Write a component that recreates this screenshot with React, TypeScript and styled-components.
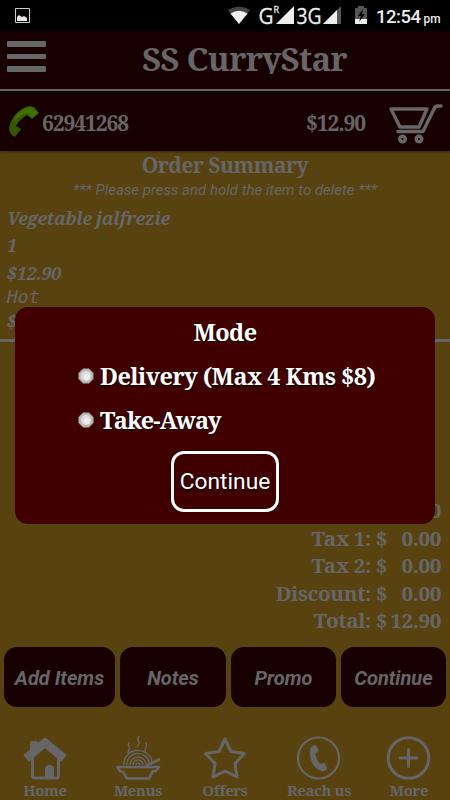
import React from 'react';
import styled, { createGlobalStyle } from 'styled-components';

const serif = '"Noto Serif", "Droid Serif", "DejaVu Serif Condensed", "DejaVu Serif", serif';
const sans = 'Roboto, sans-serif';
const muted = '#666668';
const dark = '#190000';
const gold = '#58420f';

const Global = createGlobalStyle`
  * { box-sizing: border-box; }
  body { margin: 0; background: ${gold}; }
`;
const Screen = styled.div`
  position: relative;
  width: 450px;
  height: 800px;
  overflow: hidden;
  display: flex;
  flex-direction: column;
  background: ${gold};
  color: ${muted};
  font-family: ${serif};
  font-weight: 700;
  white-space: pre;
`;
const StatusBar = styled.div`
  height: 31px;
  flex: none;
  background: #000;
  svg { display: block; }
`;
const Header = styled.header`
  height: 60px;
  flex: none;
  display: flex;
  background: ${dark};
  border-bottom: 2px solid ${muted};
  padding-left: 7px;
`;
const MenuButton = styled.div`
  width: 39px;
  padding-top: 10px;
  display: flex;
  flex-direction: column;
  gap: 7px;
`;
const MenuLine = styled.span`
  height: 5.5px;
  border-radius: 1px;
  background: #676767;
`;
const Title = styled.h1`
  margin: 0 0 0 96px;
  height: 43px;
  overflow: hidden;
  font-size: 33px;
  line-height: 56px;
  letter-spacing: -.75px;
`;
const ContactBar = styled.div`
  height: 60px;
  flex: none;
  background: ${dark};
  display: grid;
  grid-template-columns: 34px 1fr 63px;
  padding-left: 8px;
  align-items: center;
  box-shadow: 0 1px 3px rgba(0, 0, 0, .4);
  svg { display: block; }
`;
const CartButton = styled.div`
  padding-top: 6px;
`;
const ContactText = styled.div`
  display: flex;
  justify-content: space-between;
  padding: 5px 22px 0 0;
  font-size: 21px;
  line-height: 21px;
  letter-spacing: -1.1px;
`;
const Summary = styled.main`
  flex: none;
  height: 191px;
  border-bottom: 3px solid ${muted};
`;
const Heading = styled.h2`
  margin: 0;
  height: 29px;
  font-size: 21px;
  line-height: 29px;
  letter-spacing: -.5px;
  text-align: center;
`;
const Hint = styled.p`
  margin: 0 0 7px;
  font: italic 400 15px/20px ${sans};
  text-align: center;
`;
const Line = styled.div<{ $h: number }>`
  height: ${p => p.$h}px;
  line-height: ${p => p.$h}px;
  padding-left: 7px;
  font-size: 18px;
  letter-spacing: -.35px;
  font-style: italic;
`;
const MonoLine = styled(Line)`
  font-family: "DejaVu Sans Mono", monospace;
  font-weight: 400;
  font-size: 18px;
  letter-spacing: 0;
`;
const Totals = styled.div`
  margin-top: 155px;
  height: 150px;
  flex: none;
  padding-right: 9px;
`;
const TotalRow = styled.div`
  display: grid;
  grid-template-columns: 1fr 16px 54px;
  height: 27.5px;
  line-height: 27.5px;
  font-size: 20.7px;
  letter-spacing: -.4px;
  text-align: right;
`;
const Actions = styled.div`
  display: grid;
  grid-template-columns: 111px 106px 105px 105px;
  gap: 5px;
  padding-left: 4px;
  height: 60px;
  flex: none;
`;
const Action = styled.button`
  border: 0;
  padding: 2px 0 0;
  border-radius: 13px;
  background: ${dark};
  color: ${muted};
  font: italic 700 20px/58px ${sans};
`;
const Nav = styled.nav`
  display: flex;
  padding-top: 28px;
`;
const NavItem = styled.div<{ $w: number }>`
  width: ${p => p.$w}px;
  flex: none;
  display: flex;
  flex-direction: column;
  align-items: center;
  font-size: 15px;
  line-height: 19px;
  letter-spacing: -.4px;
  svg { display: block; fill: none; stroke: ${muted}; }
`;
const Modal = styled.section`
  position: absolute;
  left: 15px;
  top: 307px;
  width: 420px;
  height: 217px;
  border-radius: 13px;
  background: #400000;
  color: #fff;
  display: flex;
  flex-direction: column;
  text-shadow: 1px 1px 1px #000;
`;
const ModalTitle = styled.h3`
  margin: 4px 0 0;
  font-size: 23.5px;
  line-height: 43px;
  letter-spacing: -.6px;
  text-align: center;
`;
const Option = styled.label<{ $track: number }>`
  height: 44px;
  padding-left: 63px;
  display: flex;
  align-items: center;
  gap: 6px;
  font-size: 23.5px;
  letter-spacing: ${p => p.$track}px;
`;
const Radio = styled.svg`
  display: block;
  width: 16px;
  height: 16px;
`;
const Continue = styled.button`
  align-self: center;
  margin-top: 9px;
  width: 108px;
  height: 61px;
  border: 3px solid #fff;
  border-radius: 13px;
  padding: 1px 0 0;
  background: transparent;
  color: #fff;
  font: 400 22.8px/54px ${sans};
  text-shadow: 1px 1px 1px #000;
`;

const StatusIcons = () => (
  <svg width="450" height="31" viewBox="0 0 450 31">
    <path d="M15.5 8.5h14v14h-14z" fill="#000" stroke="#ccc" />
    <path d="M17 21v-4l2-2 3 2 2-1 3 2v3z" fill="#e8e8e8" />
    <path d="M228 10Q239 3 250 10L239 24z" fill="#444" />
    <path d="M230.5 13.5Q239 8 247.500 13.500L239 24z" fill="#eee" />
    <path d="M294 6v18h-18z" fill="#eee" />
    <path d="M341 6v18h-18z" fill="#555" />
    <path d="M337 10v14h-14z" fill="#eee" />
    <path d="M355 8h3V6h6v2h3v16h-12z" fill="#555" />
    <path d="M355 19h12v5h-12z" fill="#eee" />
    <path d="M363 9l-5 7h3l-2 6 6-8h-3z" fill="#000" />
    <g fill="#eee" stroke="#eee" strokeWidth=".3" fontFamily="Open Sans" fontWeight="400">
      <text x="258.500" y="23.5" fontSize="22" textLength="15" lengthAdjust="spacingAndGlyphs">G</text>
      <text x="273.500" y="13" fontSize="9">R</text>
      <text x="296.500" y="23.5" fontSize="22" textLength="25" lengthAdjust="spacingAndGlyphs">3G</text>
    </g>
    <g fill="#eee" fontFamily="Roboto" fontWeight="500">
      <text x="376" y="23" fontSize="18.5" textLength="45">12:54</text>
      <text x="423.5" y="23" fontSize="13.5" textLength="17" lengthAdjust="spacingAndGlyphs">pm</text>
    </g>
  </svg>
);
const Handset = () => (
  <svg width="32" height="34" viewBox="0 0 32 34">
    <path d="M1 24C3 13 11 4 22 2l4 1 5 6-7 6-5-4C14 14 10 18 8 22l5 3-6 8C3 31 1 28 1 24z" fill="#345800" />
    <path d="M5 18C8 10 15 4 22 3l3 1 5 5-6 5-5-5C13 11 8 15 5 18z" fill="#407000" />
  </svg>
);
const Cart = () => (
  <svg width="56" height="42" viewBox="0 0 56 42" fill="none" stroke="#676767" strokeWidth="3.4" strokeLinecap="round" strokeLinejoin="round">
    <path d="M4 6h36L32 24H13zM54 3h-3q-3 0-4 3L36 28.500H11" />
    <circle cx="15.500" cy="36" r="2.800" /><circle cx="32" cy="36" r="2.800" />
  </svg>
);
const HomeIcon = () => (
  <svg width="46" height="46" viewBox="0 0 46 46">
    <path d="M10.500 22v18q0 3 3 3h20q3 0 3-3V22" strokeWidth="3" />
    <path d="M4 23.500L23 7.500l19 16" strokeWidth="8.500" strokeLinejoin="round" />
    <path d="M8 8q0-2 2-2h4q2 0 2 2v5l-8 7zM23 43V34q0-4 4.500-4t4.500 4v9z" fill={muted} stroke="none" />
  </svg>
);
const BowlIcon = () => (
  <svg width="46" height="46" viewBox="0 0 46 46" strokeWidth="2.7" strokeLinejoin="round">
    <path d="M2.500 32H44l-3 4h-3l-4 7.500H12L8 37 5 36zM31 31l14-7" />
    <path d="M9 30a14 13 0 0 1 28-3M12 30a11 10.500 0 0 1 22-2M15 30a8 8 0 0 1 16 0M18 30a5 5 0 0 1 10 0M21 30a2 2 0 0 1 4 0" strokeWidth="1.3" />
    <path d="M14 7q-1 3 0 5t-1.500 6M24 1q-2 3-.5 5T22 12M31 7q1 3 0 5t-1 6" strokeWidth="1.400" />
  </svg>
);
const StarIcon = () => (
  <svg width="46" height="46" viewBox="0 0 46 46" strokeWidth="3" strokeLinejoin="round">
    <path d="M23 4l6 12.500 13.500 2L33 28.500l2 13.500-12-6-12 6 2-13.500L3.500 18.500l13.500-2z" />
  </svg>
);
const ReachIcon = () => (
  <svg width="46" height="46" viewBox="0 0 46 46">
    <circle cx="22.500" cy="23" r="20.500" strokeWidth="2.200" />
    <path d="M18.500 10q1.500 0 2 1l2 4q.5 1-1 2l-2 1.500q0 6 5 10.500l2.500-1q1-.5 2 1l2 4q.5 1-.5 2-2 1.500-5 1C17 34 13 23 14 15q.5-4 4.500-5z" fill={muted} stroke="none" />
  </svg>
);
const MoreIcon = () => (
  <svg width="46" height="46" viewBox="0 0 46 46" strokeWidth="3">
    <circle cx="22.500" cy="23" r="20.300" /><path d="M22.500 14.500v17M14 23h17" strokeLinecap="round" />
  </svg>
);
const RadioDot = () => (
  <Radio viewBox="0 0 16 16">
    <path d="M5 .7h6L15.3 5v6L11 15.3H5L.7 11V5z" fill="#bbb" stroke="#8b7777" strokeWidth=".7" />
    <circle cx="8" cy="8" r="5" fill="#ddd" /><circle cx="9" cy="9" r="3" fill="#eee" />
  </Radio>
);

const totals = [['', '12.90'], ['Tax 1:', '0.00'], ['Tax 2:', '0.00'], ['Discount:', '0.00'], ['Total:', '12.90']];

export default function App() {
  return (
    <Screen>
      <Global />
      <StatusBar><StatusIcons /></StatusBar>
      <Header>
        <MenuButton><MenuLine /><MenuLine /><MenuLine /></MenuButton>
        <Title>SS CurryStar</Title>
      </Header>
      <ContactBar>
        <Handset />
        <ContactText><span>62941268</span><span>$12.90</span></ContactText>
        <CartButton><Cart /></CartButton>
      </ContactBar>
      <Summary>
        <Heading>Order Summary</Heading>
        <Hint>*** Please press and hold the item to delete ***</Hint>
        <Line $h={23}>Vegetable jalfrezie</Line>
        <Line $h={30}>1</Line>
        <Line $h={26}>$12.90</Line>
        <MonoLine $h={21}>Hot</MonoLine>
        <Line $h={28}>$12.90</Line>
      </Summary>
      <Totals>
        {totals.map(([name, value]) => (
          <TotalRow key={name}><span>{name}</span><span>$</span><span>{value}</span></TotalRow>
        ))}
      </Totals>
      <Actions><Action>Add Items</Action><Action>Notes</Action><Action>Promo</Action><Action>Continue</Action></Actions>
      <Nav>
        <NavItem $w={90}><HomeIcon />Home</NavItem>
        <NavItem $w={96}><BowlIcon />Menus</NavItem>
        <NavItem $w={78}><StarIcon />Offers</NavItem>
        <NavItem $w={110}><ReachIcon />Reach us</NavItem>
        <NavItem $w={70}><MoreIcon />More</NavItem>
      </Nav>
      <Modal>
        <ModalTitle>Mode</ModalTitle>
        <Option $track={-0.55}><RadioDot />Delivery (Max 4 Kms $8)</Option>
        <Option $track={-0.85}><RadioDot />Take-Away</Option>
        <Continue>Continue</Continue>
      </Modal>
    </Screen>
  );
}
